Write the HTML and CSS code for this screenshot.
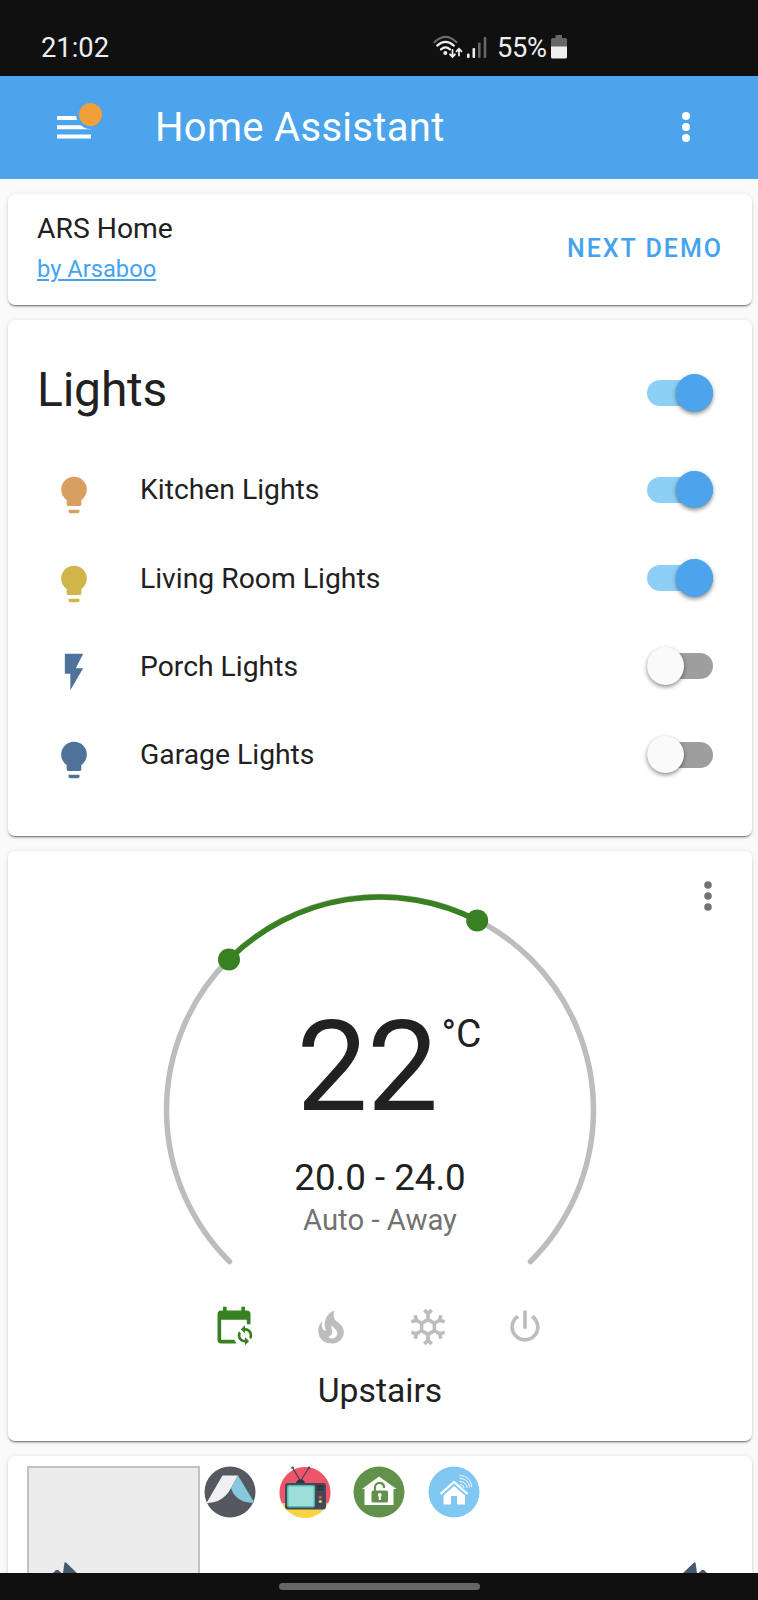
FILE: index.html
```html
<!DOCTYPE html>
<html lang="en">
<head>
    <meta charset="UTF-8">
    <meta name="viewport" content="width=device-width, initial-scale=1.0">
    <title>Home Assistant</title>
    <link rel="stylesheet" href="styles.css">
</head>
<body>
    <div class="status-bar">
        <span class="clock">21:02</span>
        <div class="status-icons">
            <svg class="wifi" viewBox="0 0 30 25" fill="none" stroke-linecap="round">
                <path d="M1.5 7.2Q12.5-3.6 23.5 7.2" stroke="#6b6b6b" stroke-width="2.2"/>
                <path d="M4.2 10.6Q12.5 3 20.8 10.6" stroke="#eee" stroke-width="2.2"/>
                <path d="M8 14.4Q12.5 10.4 17 14.4" stroke="#eee" stroke-width="2.2"/>
                <circle cx="12.3" cy="18" r="2" fill="#eee"/>
                <path d="M19.5 15v6.5M17 19.3l2.5 2.6 2.5-2.6M26 20.5V14M23.5 16.3l2.5-2.6 2.5 2.6" stroke="#eee" stroke-width="1.8"/>
            </svg>
            <svg class="signal" viewBox="0 0 20 22">
                <rect x="0" y="16.5" width="2.6" height="4.5" rx="1" fill="#eee"/>
                <rect x="5.5" y="11" width="2.6" height="10" rx="1" fill="#eee"/>
                <rect x="11" y="5.5" width="2.6" height="15.5" rx="1" fill="#666"/>
                <rect x="16.7" y="0" width="2.6" height="21" rx="1" fill="#666"/>
            </svg>
            <span class="percent">55%</span>
            <svg class="battery" viewBox="0 0 16 24">
                <path d="M4.5 0h6.5v3h3.5a1.5 1.5 0 0 1 1.5 1.5V12H0V4.500A1.5 1.5 0 0 1 1.5 3h3z" fill="#666"/>
                <path d="M0 11.5h16V22a1.5 1.5 0 0 1-1.5 1.5h-13A1.5 1.5 0 0 1 0 22z" fill="#eee"/>
            </svg>
        </div>
    </div>

    <header class="toolbar">
        <div class="menu-button">
            <svg viewBox="0 0 34 23"><path d="M0 0h34v4H0zM0 9.3h34v4H0zM0 18.6h34v4H0z" fill="#fff"/></svg>
            <span class="dot"></span>
        </div>
        <h1>Home Assistant</h1>
        <svg class="more" viewBox="0 0 8 30"><circle cx="4" cy="4" r="4"/><circle cx="4" cy="15" r="4"/><circle cx="4" cy="26" r="4"/></svg>
    </header>

    <main>
        <section class="card demo">
            <div>
                <div class="demo-name">ARS Home</div>
                <a href="#">by Arsaboo</a>
            </div>
            <button type="button">NEXT DEMO</button>
        </section>

        <section class="card lights">
            <div class="lights-header">
                <h2>Lights</h2>
                <span class="toggle on"></span>
            </div>
            <div class="row">
                <svg class="icon orange" viewBox="0 0 24 24"><use href="#bulb"/></svg>
                <span class="name">Kitchen Lights</span>
                <span class="toggle on"></span>
            </div>
            <div class="row">
                <svg class="icon yellow" viewBox="0 0 24 24"><use href="#bulb"/></svg>
                <span class="name">Living Room Lights</span>
                <span class="toggle on"></span>
            </div>
            <div class="row">
                <svg class="icon blue" viewBox="0 0 24 24"><path d="M7,2V13H10V22L17,10H13L17,2H7Z"/></svg>
                <span class="name">Porch Lights</span>
                <span class="toggle"></span>
            </div>
            <div class="row">
                <svg class="icon blue" viewBox="0 0 24 24">
                    <path id="bulb" d="M12,2A7,7 0 0,0 5,9C5,11.38 6.19,13.47 8,14.74V17A1,1 0 0,0 9,18H15A1,1 0 0,0 16,17V14.74C17.81,13.47 19,11.38 19,9A7,7 0 0,0 12,2M9,21A1,1 0 0,0 10,22H14A1,1 0 0,0 15,21V20H9V21Z"/>
                </svg>
                <span class="name">Garage Lights</span>
                <span class="toggle"></span>
            </div>
        </section>

        <section class="card thermostat">
            <svg class="more" viewBox="0 0 8 30"><circle cx="4" cy="4" r="3.8"/><circle cx="4" cy="15" r="3.8"/><circle cx="4" cy="26" r="3.8"/></svg>
            <div class="dial">
                <svg viewBox="0 0 440 380" fill="none" stroke-width="5.5" stroke-linecap="round">
                    <path d="M69.5 367.5A213.5 213.5 0 1 1 370.5 367.5" stroke="#bdbdbd"/>
                    <path d="M69 65.5A213.5 213.5 0 0 1 317.2 26.5" stroke="#388122"/>
                    <circle cx="69" cy="65.5" r="11" fill="#388122"/>
                    <circle cx="317.2" cy="26.5" r="11" fill="#388122"/>
                </svg>
                <div class="reading">
                    <div class="current">22<sup>°C</sup></div>
                    <div class="target">20.0 - 24.0</div>
                    <div class="mode">Auto - Away</div>
                </div>
            </div>
            <div class="modes">
                <svg class="active" viewBox="0 0 24 24"><path d="M18,11V12.5C21.19,12.5 23.09,16.05 21.33,18.71L20.24,17.62C21.06,15.96 19.85,14 18,14V15.5L15.75,13.25L18,11M18,22V20.5C14.81,20.5 12.91,16.95 14.67,14.29L15.76,15.38C14.94,17.04 16.15,19 18,19V17.5L20.25,19.75L18,22M19,3H18V1H16V3H8V1H6V3H5A2,2 0 0,0 3,5V19A2,2 0 0,0 5,21H13.5C12.9,20.4 12.4,19.7 12.1,19H5V8H19V10.5H21V5A2,2 0 0,0 19,3Z"/></svg>
                <svg viewBox="0 0 24 24"><path d="M17.66 11.2C17.43 10.9 17.15 10.64 16.89 10.38C16.22 9.78 15.46 9.35 14.82 8.72C13.33 7.26 13 4.85 13.95 3C13 3.23 12.17 3.75 11.46 4.32C8.87 6.4 7.85 10.07 9.07 13.22C9.11 13.32 9.15 13.42 9.15 13.55C9.15 13.77 9 13.97 8.8 14.05C8.57 14.15 8.33 14.09 8.14 13.93C8.08 13.88 8.04 13.83 8 13.76C6.87 12.33 6.69 10.28 7.45 8.64C5.78 10 4.87 12.3 5 14.47C5.06 14.97 5.12 15.47 5.29 15.97C5.43 16.57 5.7 17.17 6 17.7C7.08 19.43 8.95 20.67 10.96 20.92C13.1 21.19 15.39 20.8 17.03 19.32C18.86 17.66 19.5 15 18.56 12.72L18.43 12.46C18.22 12 17.66 11.2 17.66 11.2M14.5 17.5C14.22 17.74 13.76 18 13.4 18.1C12.28 18.5 11.16 17.94 10.5 17.28C11.69 17 12.4 16.12 12.61 15.23C12.78 14.43 12.46 13.77 12.33 13C12.21 12.26 12.23 11.63 12.5 10.94C12.69 11.32 12.89 11.7 13.13 12C13.9 13 15.11 13.44 15.37 14.8C15.41 14.94 15.43 15.08 15.43 15.23C15.46 16.05 15.1 16.95 14.5 17.5Z"/></svg>
                <svg viewBox="0 0 24 24"><path d="M20.79,13.95L18.46,14.57L16.46,13.44V10.56L18.46,9.43L20.79,10.05L21.31,8.12L19.54,7.65L20,5.88L18.07,5.36L17.45,7.69L15.45,8.82L13,7.38V5.12L14.71,3.41L13.29,2L12,3.29L10.71,2L9.29,3.41L11,5.12V7.38L8.5,8.82L6.5,7.69L5.92,5.36L4,5.88L4.47,7.65L2.7,8.12L3.22,10.05L5.55,9.43L7.55,10.56V13.45L5.55,14.58L3.22,13.96L2.7,15.89L4.47,16.36L4,18.12L5.93,18.64L6.55,16.31L8.55,15.18L11,16.62V18.88L9.29,20.59L10.71,22L12,20.71L13.29,22L14.7,20.59L13,18.88V16.62L15.5,15.17L17.5,16.3L18.12,18.63L20,18.12L19.53,16.35L21.3,15.88L20.79,13.95M9.5,10.56L12,9.11L14.5,10.56V13.44L12,14.89L9.5,13.44V10.56Z"/></svg>
                <svg viewBox="0 0 24 24"><path d="M16.56,5.44L15.11,6.89C16.84,7.94 18,9.83 18,12A6,6 0 0,1 12,18A6,6 0 0,1 6,12C6,9.83 7.16,7.94 8.88,6.88L7.44,5.44C5.36,6.88 4,9.28 4,12A8,8 0 0,0 12,20A8,8 0 0,0 20,12C20,9.28 18.64,6.88 16.56,5.44M13,3H11V13H13"/></svg>
            </div>
            <div class="zone">Upstairs</div>
        </section>

        <section class="card floorplan">
            <div class="room">
                <svg class="plant" viewBox="0 0 26 12"><path d="M0 12L4 8L6 8L9.500 11L11 11L12.500 0.500L14 0.500L26 12z"/></svg>
            </div>
            <div class="badges">
                <svg viewBox="0 0 52 52">
                    <circle cx="26" cy="26" r="25.5" fill="#55595f"/>
                    <path d="M18.5 9.5H34L27 22Q19 37 2.500 37z" fill="#f0f0f0"/>
                    <path d="M34 9.5L50.5 37Q32 37 27 22z" fill="#86c9de"/>
                </svg>
                <svg viewBox="0 0 52 52">
                    <path d="M3 37.5A25.5 25.5 0 1 1 49 37.5z" fill="#ed5569"/>
                    <path d="M3 37.5H49A25.5 25.5 0 0 1 3 37.5z" fill="#fad344"/>
                    <path d="M13.5 1.5L22 16M30 1.5L21 16" stroke="#454656" stroke-width="1.3"/>
                    <circle cx="13.5" cy="1.8" r="1.2" fill="#454656"/><circle cx="30" cy="1.8" r="1.2" fill="#454656"/>
                    <path d="M17 18q0-4.5 4.500-4.500T26 18z" fill="#333440"/>
                    <rect x="6" y="17" width="41" height="26.5" rx="3" fill="#454656"/>
                    <rect x="8" y="19" width="28" height="22.5" rx="2" fill="#4cc0b9"/>
                    <rect x="9.5" y="20.5" width="25" height="19.5" rx="1" fill="#9fdfda"/>
                    <path d="M38 20.5h6.5M38 23.5h6.5" stroke="#30313c" stroke-width="1.8"/>
                    <circle cx="41.3" cy="31.3" r="1.6" fill="#e8522d"/><circle cx="41.3" cy="35.5" r="1.6" fill="#b8df8a"/>
                </svg>
                <svg viewBox="0 0 52 52">
                    <circle cx="26" cy="26" r="25.5" fill="#62914b"/>
                    <path d="M26 10.5L43.5 23H40.5V39H11.5V23H9z" fill="#fff"/>
                    <rect x="18.5" y="24.5" width="16.5" height="12" rx="1.5" fill="#62914b"/>
                    <path d="M22 25V21.5a4.6 4.6 0 0 1 9-1.3V22" fill="none" stroke="#62914b" stroke-width="2.2"/>
                    <circle cx="26.8" cy="29" r="1.9" fill="#fff"/><path d="M25.8 29h2v5h-2z" fill="#fff"/>
                </svg>
                <svg viewBox="0 0 52 52" fill="none" stroke="#fff">
                    <circle cx="26" cy="26" r="25.5" fill="#80c8f2" stroke="none"/>
                    <path d="M12.5 28L26 16L39.5 28" stroke-width="2.3"/>
                    <path d="M26 20L37 29.5V38.5H29V30H23V38.5H15.5V29.5z" fill="#fff" stroke="none"/>
                    <path d="M32 18.500Q35.5 18.500 36 22M31.500 15.500Q38 15.500 39 22M31.500 12.500Q40.500 12.500 41.500 21.500M31.500 9.500Q42.500 9.500 43.700 21" stroke-width="0.900"/>
                </svg>
            </div>
            <svg class="plant right" viewBox="0 0 26 12"><path d="M0 12L4 8L6 8L9.500 11L11 11L12.500 0.500L14 0.500L26 12z"/></svg>
        </section>
    </main>

    <div class="nav-bar"><span class="pill"></span></div>
</body>
</html>
```
FILE: styles.css
```css
* { box-sizing: border-box; }
body { margin: 0; width: 758px; height: 1600px; display: flex; flex-direction: column; overflow: hidden; background: #fafafa; color: #212121; font-family: Roboto, sans-serif; }
h1, h2 { margin: 0; font-weight: 400; }
svg { display: block; flex: none; }

.status-bar { height: 76px; flex: none; display: flex; justify-content: space-between; align-items: center; padding: 19px 191px 0 41px; background: #101010; color: #eee; font-size: 27.3px; }
.status-icons { display: flex; align-items: center; }
.wifi { width: 30px; height: 25px; margin-right: 4px; }
.signal { width: 20px; height: 22px; margin-right: 10px; }
.percent { width: 54px; font-size: 27.3px; letter-spacing: -0.3px; }
.battery { width: 16px; height: 24px; margin-top: -2px; }

.toolbar { height: 103px; flex: none; display: flex; align-items: center; padding: 0 68px 0 57px; background: #4ba4ec; color: #fff; }
.toolbar h1 { flex: 1; margin-left: 64px; padding-bottom: 1px; font-size: 40px; letter-spacing: 0.3px; }
.toolbar .more { margin-top: -1px; }
.menu-button { position: relative; width: 34px; }
.menu-button svg { width: 34px; height: 23px; }
.dot { position: absolute; top: -16px; left: 19px; width: 29px; height: 29px; border: 3px solid #4ba4ec; border-radius: 50%; background: #f19f38; }
.more { width: 8px; height: 30px; fill: currentColor; }

main { flex: 1; min-height: 0; overflow: hidden; display: flex; flex-direction: column; gap: 15px; padding: 15px 6px 0 8px; }
.card { flex: none; background: #fff; border-radius: 7px; box-shadow: 0 2px 2px -1px rgba(0, 0, 0, 0.55), 0 1px 5px rgba(0, 0, 0, 0.13); }

.demo { height: 110.5px; display: flex; justify-content: space-between; padding: 17px 29px 0; }
.demo-name { font-size: 28.3px; line-height: 36px; }
.demo a { font-size: 23.7px; line-height: 44px; color: #45a3ee; }
.demo button { height: 75px; padding: 0; border: none; background: none; color: #45a3ee; font: 500 25px Roboto, sans-serif; letter-spacing: 2px; }

.lights { height: 516px; }
.lights-header { display: flex; justify-content: space-between; align-items: center; height: 126px; padding: 21px 39px 0 29px; }
.lights h2 { padding-bottom: 7px; font-size: 48px; letter-spacing: -0.2px; }
.row { display: flex; align-items: center; height: 88.4px; padding: 0 39px 0 44px; }
.icon { width: 44px; height: 44px; margin-top: 11px; }
.orange { fill: #d99f60; }
.yellow { fill: #d0b648; }
.blue { fill: #4f729b; }
.name { flex: 1; margin-left: 44px; font-size: 28.3px; }

.toggle { position: relative; width: 66px; height: 26px; border-radius: 13px; background: #9e9e9e; }
.toggle::after { content: ""; position: absolute; top: -6px; left: 0; width: 37px; height: 37.500px; border-radius: 50%; background: #fafafa; box-shadow: 0 2px 4px rgba(0, 0, 0, 0.45); }
.toggle.on { background: #8ecff5; }
.toggle.on::after { left: 29px; background: #4ba4ec; }

.thermostat { position: relative; height: 590px; display: flex; flex-direction: column; align-items: center; padding-top: 43px; }
.thermostat .more { position: absolute; top: 30px; right: 40px; color: #727272; }
.dial { position: relative; width: 440px; height: 380px; }
.dial svg { width: 440px; height: 380px; }
.reading { position: absolute; top: 98px; left: 0; right: 0; text-align: center; }
.current { width: max-content; margin: 0 auto; position: relative; font-size: 127px; line-height: 150px; left: -13px; letter-spacing: -1px; }
.current sup { position: absolute; top: 19px; left: calc(100% + 4px); font-size: 39px; line-height: 46px; letter-spacing: 0; }
.target { margin-top: 15px; font-size: 36.7px; line-height: 42px; }
.mode { font-size: 29.3px; line-height: 42px; color: #727272; }
.modes { position: relative; left: -1px; display: flex; gap: 53px; margin-top: 31px; }
.modes svg { width: 44px; height: 44px; fill: #bdbdbd; }
.modes .active { fill: #388122; }
.zone { margin-top: 21px; font-size: 33.7px; line-height: 42px; }

.floorplan { position: relative; height: 200px; display: flex; padding: 10px 19px 0; }
.room { position: relative; width: 173px; height: 180px; border: 2px solid #c2c2c2; background: #ececec; }
.badges { display: flex; gap: 22.5px; margin-left: 4px; }
.badges svg { width: 52px; height: 52px; }
.plant { position: absolute; top: 94px; left: 23px; width: 26px; height: 12px; fill: #465a6e; }
.plant.right { top: 106px; left: 674px; transform: scaleX(-1); }

.nav-bar { height: 27px; flex: none; display: flex; justify-content: center; align-items: center; background: #101010; }
.pill { width: 201px; height: 7px; border-radius: 4px; background: #666; }
```
